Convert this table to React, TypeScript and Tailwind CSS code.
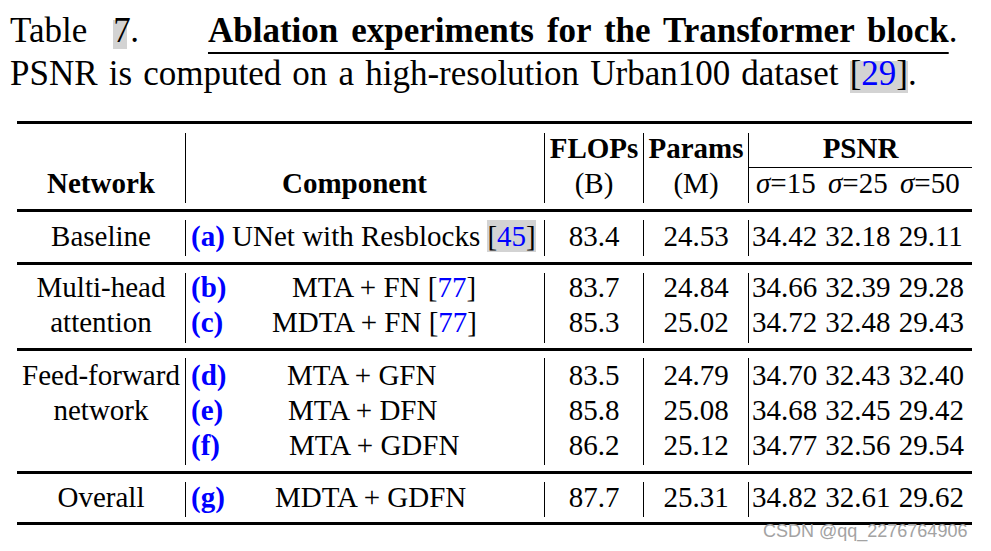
import React from 'react';

type Row = {
  label: string;
  comp: React.ReactNode;
  gap?: number;
  flops: string;
  params: string;
  psnr: string[];
};

type Section = {
  network: string[];
  lh: string;
  height: string;
  mt: string;
  mb: string;
  shift: string;
  rows: Row[];
};

const Cite = ({ n, boxed }: { n: string; boxed?: boolean }) => (
  <span className={boxed ? 'bg-[#d3d3d3]' : ''}>
    [<span className="text-[#0000ff]">{n}</span>]
  </span>
);

const sections: Section[] = [
  {
    network: ['Baseline'],
    lh: 'leading-[36px]',
    height: 'h-[36px]',
    mt: 'mt-[8px]',
    mb: 'mb-[6px]',
    shift: '-mt-[2px]',
    rows: [
      {
        label: '(a)',
        comp: (
          <>
            {' '}UNet with Resblocks <Cite n="45" boxed />
          </>
        ),
        flops: '83.4',
        params: '24.53',
        psnr: ['34.42', '32.18', '29.11'],
      },
    ],
  },
  {
    network: ['Multi-head', 'attention'],
    lh: 'leading-[35px]',
    height: 'h-[70px]',
    mt: 'mt-[8px]',
    mb: 'mb-[5px]',
    shift: '-mt-[3px]',
    rows: [
      { label: '(b)', gap: 61, comp: <>MTA + FN <Cite n="77" /></>, flops: '83.7', params: '24.84', psnr: ['34.66', '32.39', '29.28'] },
      { label: '(c)', gap: 41, comp: <>MDTA + FN <Cite n="77" /></>, flops: '85.3', params: '25.02', psnr: ['34.72', '32.48', '29.43'] },
    ],
  },
  {
    network: ['Feed-forward', 'network'],
    lh: 'leading-[35px]',
    height: 'h-[107px]',
    mt: 'mt-[7px]',
    mb: 'mb-[6px]',
    shift: 'mt-0',
    rows: [
      { label: '(d)', gap: 56, comp: 'MTA + GFN', flops: '83.5', params: '24.79', psnr: ['34.70', '32.43', '32.40'] },
      { label: '(e)', gap: 57, comp: 'MTA + DFN', flops: '85.8', params: '25.08', psnr: ['34.68', '32.45', '29.42'] },
      { label: '(f)', gap: 58, comp: 'MTA + GDFN', flops: '86.2', params: '25.12', psnr: ['34.77', '32.56', '29.54'] },
    ],
  },
  {
    network: ['Overall'],
    lh: 'leading-[35px]',
    height: 'h-[35px]',
    mt: 'mt-[8px]',
    mb: 'mb-[5px]',
    shift: '-mt-[2px]',
    rows: [
      { label: '(g)', gap: 44, comp: 'MDTA + GDFN', flops: '87.7', params: '25.31', psnr: ['34.82', '32.61', '29.62'] },
    ],
  },
];

const gapClass: Record<number, string> = {
  61: 'ml-[61px]',
  41: 'ml-[41px]',
  56: 'ml-[56px]',
  57: 'ml-[57px]',
  58: 'ml-[58px]',
  44: 'ml-[44px]',
};

const Rule = () => <div className="h-[3px] bg-black" />;

const BodySection = ({ s }: { s: Section }) => (
  <div className={`flex ${s.height} ${s.mt} ${s.mb} ${s.lh}`}>
    <div className="w-[168px] text-center">
      <div className={s.shift}>
        {s.network.map((n) => (
          <div key={n}>{n}</div>
        ))}
      </div>
    </div>
    <div className="w-[359px] border-l border-black pl-[5px]">
      <div className={s.shift}>
        {s.rows.map((r) => (
          <div key={r.label} className="flex whitespace-pre">
            <span className={`font-bold text-[#0000ff] ${r.gap ? 'w-[40px]' : ''}`}>{r.label}</span>
            <span className={r.gap ? gapClass[r.gap] : ''}>{r.comp}</span>
          </div>
        ))}
      </div>
    </div>
    <div className="w-[99px] border-l border-black text-center">
      <div className={s.shift}>
        {s.rows.map((r) => (
          <div key={r.label}>{r.flops}</div>
        ))}
      </div>
    </div>
    <div className="w-[105px] border-l border-black text-center">
      <div className={s.shift}>
        {s.rows.map((r) => (
          <div key={r.label}>{r.params}</div>
        ))}
      </div>
    </div>
    <div className="w-[224px] border-l border-black pl-[3px]">
      <div className={s.shift}>
        {s.rows.map((r) => (
          <div key={r.label} className="flex">
            {r.psnr.map((v, i) => (
              <span key={i} className="w-[75px]">{v}</span>
            ))}
          </div>
        ))}
      </div>
    </div>
  </div>
);

export default function App() {
  return (
    <div className="relative h-[551px] w-[991px] overflow-hidden bg-white font-['Liberation_Serif',serif] text-black">
      {/* Caption */}
      <div className="pl-[10px] pt-[9px] text-[35px] leading-[43px]">
        <div className="flex items-baseline whitespace-pre">
          <span>Table</span>
          <span className="ml-[26px] inline-block h-[29px] w-[14px] bg-[#d3d3d3] leading-[22px]">7</span>
          <span className="ml-[3px]">.</span>
          <span className="ml-[69px] font-bold underline decoration-2 underline-offset-[10px] [word-spacing:4.2px]">
            Ablation experiments for the Transformer block
          </span>
          <span>.</span>
        </div>
        <div className="flex items-baseline whitespace-pre [word-spacing:2.4px]">
          <span>PSNR is computed on a high-resolution Urban100 dataset </span>
          <span className="inline-block h-[32px] bg-[#d3d3d3] leading-[26px]">
            [<span className="text-[#0000ff]">29</span>]
          </span>
          <span>.</span>
        </div>
      </div>

      {/* Table */}
      <div className="ml-[17px] mt-[26px] w-[955px] text-[29px]">
        <Rule />
        <div className="mb-[6px] mt-[9px] flex h-[70px] leading-[35px]">
          <div className="w-[168px] pt-[33px] text-center font-bold">Network</div>
          <div className="w-[359px] border-l border-black pl-[96px] pt-[33px] font-bold">Component</div>
          <div className="w-[99px] border-l border-black text-center">
            <div className="-mt-[2px] font-bold">FLOPs</div>
            <div>(B)</div>
          </div>
          <div className="w-[105px] border-l border-black text-center">
            <div className="-mt-[2px] font-bold">Params</div>
            <div>(M)</div>
          </div>
          <div className="flex w-[224px] flex-col border-l border-black">
            <div className="h-[34px] text-center font-bold leading-[30px]">PSNR</div>
            <div className="h-px bg-black" />
            <div className="-mt-[2px] flex pl-[7px]">
              {['15', '25', '50'].map((v) => (
                <span key={v} className="w-[75px]">
                  <i>σ</i>={v}
                </span>
              ))}
            </div>
          </div>
        </div>
        <Rule />
        {sections.map((s, i) => (
          <React.Fragment key={i}>
            <BodySection s={s} />
            <Rule />
          </React.Fragment>
        ))}
      </div>

      {/* Watermark */}
      <div className="absolute left-[763px] top-[522px] font-['Liberation_Sans',sans-serif] text-[18px] leading-[18px] text-[#a3a3a3]">
        CSDN @qq_2276764906
      </div>
    </div>
  );
}
